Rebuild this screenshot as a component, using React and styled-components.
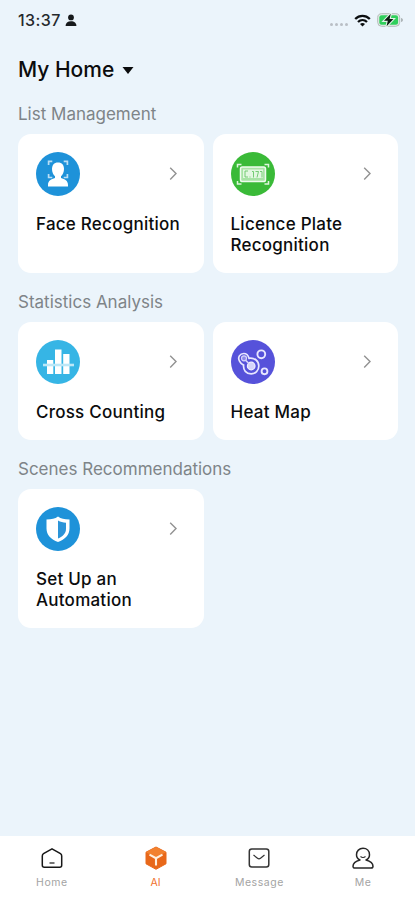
import styled, { createGlobalStyle } from 'styled-components';

const GlobalStyle = createGlobalStyle`
  * {
    box-sizing: border-box;
  }
  body {
    margin: 0;
    background: #ebf4fb;
    font-family: Inter, 'Liberation Sans', sans-serif;
    color: #0b0c0d;
  }
  svg {
    display: block;
    flex-shrink: 0;
  }
`;

const Screen = styled.div`
  width: 100%;
  height: 100vh;
  display: flex;
  flex-direction: column;
`;

const StatusBar = styled.header`
  height: 40px;
  padding: 0 11px 0 18px;
  display: flex;
  align-items: center;
  justify-content: space-between;
`;

const StatusGroup = styled.div`
  display: flex;
  align-items: center;
  gap: ${({ $gap }) => $gap}px;
`;

const Clock = styled.span`
  font-size: 16px;
  font-weight: 500;
  letter-spacing: 0.4px;
  color: #25292c;
`;

const SignalDots = styled.div`
  display: flex;
  gap: 2px;
  padding-top: 8px;
  span {
    width: 3px;
    height: 3px;
    border-radius: 50%;
    background: #b9bfc5;
  }
`;

const HomePicker = styled.button`
  height: 60px;
  padding: 0 18px;
  border: 0;
  background: none;
  display: flex;
  align-items: center;
  gap: 8px;
  font: 500 21px/26px Inter, sans-serif;
  color: #0b0c0d;
`;

const Content = styled.main`
  flex: 1;
  padding: 4px 17px 0 18px;
`;

const Section = styled.section`
  margin-bottom: 19.5px;
`;

const SectionTitle = styled.h2`
  margin: 0 0 9.5px;
  font-size: 17px;
  line-height: 20px;
  font-weight: 400;
  color: #7e8488;
`;

const CardGrid = styled.div`
  display: grid;
  grid-template-columns: 1fr 1fr;
  gap: 9px;
`;

const Card = styled.article`
  padding: 18px 18px 17px;
  border-radius: 13px;
  background: #fff;
`;

const CardTop = styled.div`
  display: flex;
  align-items: center;
  justify-content: space-between;
  padding-right: 8px;
`;

const CardTitle = styled.h3`
  margin: 18px -8px 0 0;
  font-size: 17px;
  line-height: 21px;
  font-weight: 500;
  letter-spacing: 0.24px;
  white-space: pre-line;
`;

const TabBar = styled.nav`
  height: 64px;
  background: #fff;
  display: grid;
  grid-template-columns: repeat(4, 1fr);
`;

const Tab = styled.a`
  display: flex;
  flex-direction: column;
  align-items: center;
  padding-top: 10px;
  font-size: 10.5px;
  line-height: 14px;
  letter-spacing: ${({ $active }) => ($active ? 0 : 0.55)}px;
  color: ${({ $active }) => ($active ? '#f0702c' : '#a3a3a3')};
  svg {
    margin-bottom: 6px;
  }
`;

const PersonGlyph = () => (
  <svg width="12" height="13" viewBox="0 0 12 13" fill="#16191b">
    <circle cx="6" cy="3.4" r="2.9" />
    <path d="M.6 12c0-3 2-4.800 5.400-4.800s5.400 1.800 5.400 4.800z" />
  </svg>
);

const WifiGlyph = () => (
  <svg width="17" height="13" viewBox="0 0 17 13" fill="none" stroke="#0c0f10" strokeWidth="2.3">
    <path d="M1.2 5C5.4.8 11.6.8 15.8 5" />
    <path d="M4 8c2.6-2.500 6.400-2.500 9 0" />
    <path d="M8.500 12.600 6 10c1.500-1.200 3.500-1.200 5 0z" fill="#0c0f10" stroke="none" />
  </svg>
);

const BatteryGlyph = () => (
  <svg width="27" height="14" viewBox="0 0 27 14">
    <rect x=".7" y=".7" width="22" height="12.6" rx="4" fill="#e4ece9" stroke="#b3bab8" />
    <rect x="2.3" y="2.3" width="18.8" height="9.4" rx="2.2" fill="#2fcf5b" />
    <path d="M24.300 5v4c1.800-.5 1.800-3.500 0-4z" fill="#8f9698" />
    <path
      d="M13.800.8 7 7.800h3.800l-1.200 5.400 6.800-7.200h-3.800z"
      fill="#0b1b10"
      stroke="#dff3e5"
      strokeWidth="2.200"
      paintOrder="stroke"
    />
  </svg>
);

const Chevron = () => (
  <svg width="10" height="14" viewBox="0 0 10 14" fill="none" stroke="#929292" strokeWidth="1.4">
    <path d="m2.200 .8 5.800 5.800-5.800 5.800" />
  </svg>
);

const Badge = ({ color, children }) => (
  <svg width="44" height="44" viewBox="0 0 44 44" fill="none">
    <circle cx="22" cy="22" r="22" fill={color} />
    {children}
  </svg>
);

const FaceIcon = () => (
  <Badge color="#1e92d9">
    <path
      d="M12.6 13V9.300h3.700M27.700 9.300h3.700V13M12.600 22v3.500h3.700M27.700 25.500h3.700V22"
      stroke="#b9def5"
      strokeWidth="1.7"
    />
    <path
      d="M22 10.500c-4 0-6 2.700-6 6.500 0 3.300 1.300 5.800 3 7.200v1.900c-3.700 1.200-7 2.600-7 6.800v1.600h20v-1.600c0-4.200-3.300-5.600-7-6.800v-1.900c1.700-1.400 3-3.900 3-7.200 0-3.800-2-6.500-6-6.500z"
      fill="#fff"
    />
  </Badge>
);

const PlateIcon = () => (
  <Badge color="#3aba38">
    <path d="M6.500 15.500v-3h4M33.500 12.500h4v3M6.500 29v3h4M33.500 32h4v-3" stroke="#def5dc" strokeWidth="1.5" />
    <rect x="9.5" y="15" width="25" height="14.5" rx="1.8" fill="#a8e3a5" stroke="#effbee" strokeWidth="1.5" />
    <rect x="12" y="17.5" width="20" height="8.5" fill="#e3f7e1" />
    <path
      d="M17 19h-3v6h3M19 24.500v1M21 19.500h1.500v6M24.500 19.500h3l-1.500 6M29 19.500h2v6"
      stroke="#68c666"
      strokeWidth=".9"
    />
  </Badge>
);

const CountIcon = () => (
  <Badge color="#36b5e5">
    <path d="M11 20h6.300v14H11zM19 9.500h6.500V34H19zM27.200 14h6.300v20h-6.300z" fill="#fff" />
    <path d="M7 25h31" stroke="#bce7f7" strokeWidth="2.6" />
  </Badge>
);

const HeatIcon = () => (
  <Badge color="#5652da">
    <path
      d="M8.500 21.200c-2.200-4 .5-7.700 4.300-7.700 3.200 0 4.400 2 5.200 4.800 5.800-.8 9.800 2.800 9.800 7.700 0 4.500-3.300 7.800-7.600 7.800-5 0-8.200-3.700-7.600-8.700-2-.9-3.200-1.900-4.100-3.900z"
      stroke="#e8e7ff"
      strokeWidth="1.7"
    />
    <circle cx="20.2" cy="26" r="3.8" fill="#d6d4fa" stroke="#f1f0ff" strokeWidth="1.2" />
    <circle cx="13" cy="18.3" r="2.5" fill="#8d89e8" stroke="#d6d4fa" strokeWidth="1.2" />
    <path d="m14.600 20.200 3 3" stroke="#d6d4fa" strokeWidth="1.6" />
    <circle cx="30.3" cy="14.3" r="3.900" stroke="#e8e7ff" strokeWidth="1.9" />
    <circle cx="33.5" cy="31.3" r="2.900" stroke="#e8e7ff" strokeWidth="1.9" />
  </Badge>
);

const ShieldIcon = () => (
  <Badge color="#1e92d9">
    <path
      d="M22 9.500c3 2.300 6.300 3 11.500 3v9c0 6.500-4.500 11-11.500 13.500-7-2.500-11.500-7-11.500-13.500v-9c5.200 0 8.500-.7 11.500-3z"
      fill="#fff"
    />
    <path d="M22 13.500c2.600 1.400 4.800 2 8 2.200v6c0 4.600-3 7.600-8 9.800z" fill="#2b94d8" />
  </Badge>
);

const HomeTabIcon = () => (
  <svg width="24" height="24" viewBox="0 0 24 24" fill="none" stroke="#171717" strokeWidth="1.5">
    <path
      d="M12 2.800 3.500 7.700c-1 .6-1.200 1.100-1.200 2.200v9.400c0 1.400.7 2 2 2h15.400c1.300 0 2-.6 2-2V9.900c0-1.100-.2-1.600-1.200-2.200z"
      strokeLinejoin="round"
    />
    <path d="M9.500 17h5" strokeWidth="1.2" />
  </svg>
);

const CubeTabIcon = () => (
  <svg width="24" height="24" viewBox="0 0 24 24">
    <path d="M12 1 22 6.200v11.600L12 23.300 2 17.800V6.200z" fill="#e8681a" stroke="#e8681a" strokeLinejoin="round" />
    <path d="M12 1 22 6.200 12 11.700 2 6.200z" fill="#f2812f" />
    <path d="m5.500 8.700 6.500 3.500 6.500-3.500M12 12.200v7.300" fill="none" stroke="#fff0df" strokeWidth="2.1" />
  </svg>
);

const MessageTabIcon = () => (
  <svg width="24" height="24" viewBox="0 0 24 24" fill="none" stroke="#343434" strokeWidth="1.5">
    <rect x="2.3" y="3" width="19.5" height="18" rx="2.5" />
    <path d="m6.500 9 4 3.200c1 .8 2 .8 3 0l4-3.200" strokeWidth="1.2" />
  </svg>
);

const MeTabIcon = () => (
  <svg width="24" height="24" viewBox="0 0 24 24" fill="none" stroke="#272727" strokeWidth="1.5">
    <path
      d="M9 14c-2.500-1.200-3.500-3-3.500-5.300C5.500 5 8.200 2.300 12 2.300S18.500 5 18.500 8.700c0 2.300-1 4.100-3.500 5.300 4 1 7 3.300 7 6.300 0 1.200-.7 1.800-2 1.800H4c-1.300 0-2-.6-2-1.800 0-3 3-5.300 7-6.300z"
      strokeLinejoin="round"
    />
    <path d="M9.500 10.500c1.500 1.200 3.500 1.200 5 0" strokeWidth="1.1" />
  </svg>
);

const sections = [
  {
    title: 'List Management',
    cards: [
      { title: 'Face Recognition', icon: FaceIcon },
      { title: 'Licence Plate\nRecognition', icon: PlateIcon },
    ],
  },
  {
    title: 'Statistics Analysis',
    cards: [
      { title: 'Cross Counting', icon: CountIcon },
      { title: 'Heat Map', icon: HeatIcon },
    ],
  },
  {
    title: 'Scenes Recommendations',
    cards: [{ title: 'Set Up an\nAutomation', icon: ShieldIcon }],
  },
];

const tabs = [
  { label: 'Home', icon: HomeTabIcon },
  { label: 'AI', icon: CubeTabIcon, active: true },
  { label: 'Message', icon: MessageTabIcon },
  { label: 'Me', icon: MeTabIcon },
];

export default function App() {
  return (
    <Screen>
      <GlobalStyle />
      <StatusBar>
        <StatusGroup $gap={4}>
          <Clock>13:37</Clock>
          <PersonGlyph />
        </StatusGroup>
        <StatusGroup $gap={6}>
          <SignalDots>
            <span />
            <span />
            <span />
            <span />
          </SignalDots>
          <WifiGlyph />
          <BatteryGlyph />
        </StatusGroup>
      </StatusBar>
      <HomePicker>
        My Home
        <svg width="12" height="8" viewBox="0 0 12 8" fill="#0b0c0d">
          <path d="M.5 1h11L6 8z" />
        </svg>
      </HomePicker>
      <Content>
        {sections.map(({ title, cards }) => (
          <Section key={title}>
            <SectionTitle>{title}</SectionTitle>
            <CardGrid>
              {cards.map(({ title, icon: Icon }) => (
                <Card key={title}>
                  <CardTop>
                    <Icon />
                    <Chevron />
                  </CardTop>
                  <CardTitle>{title}</CardTitle>
                </Card>
              ))}
            </CardGrid>
          </Section>
        ))}
      </Content>
      <TabBar>
        {tabs.map(({ label, icon: Icon, active }) => (
          <Tab key={label} $active={active}>
            <Icon />
            {label}
          </Tab>
        ))}
      </TabBar>
    </Screen>
  );
}
